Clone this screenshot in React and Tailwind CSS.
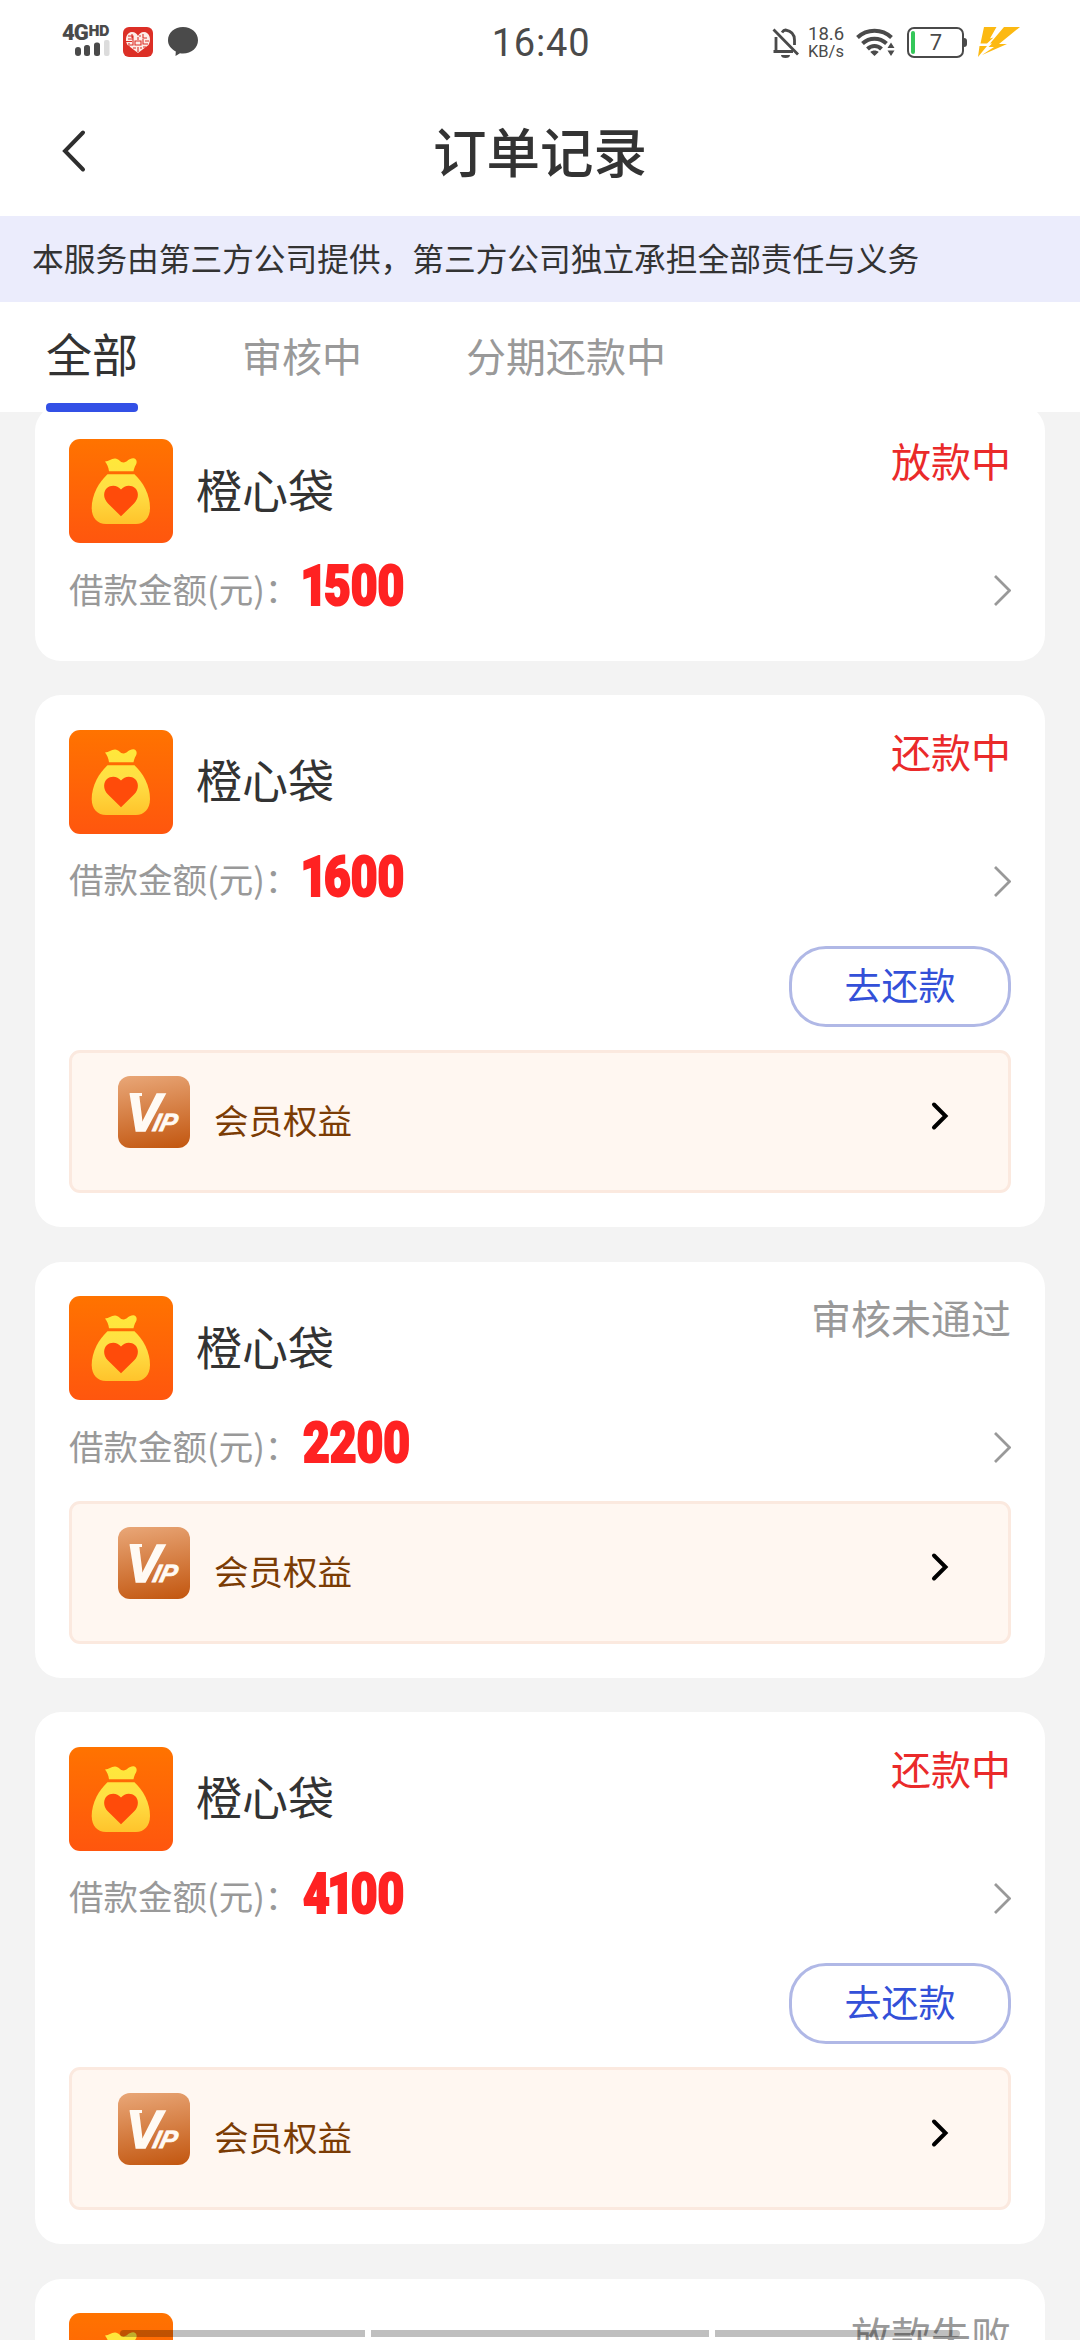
import React, { useState } from 'react';

const TABS = ['全部', '审核中', '分期还款中'];

const ORDERS = [
  { id: 1, amount: '1500', status: '放款中', active: true, canRepay: false, vip: false },
  { id: 2, amount: '1600', status: '还款中', active: true, canRepay: true, vip: true },
  { id: 3, amount: '2200', status: '审核未通过', active: false, canRepay: false, vip: true },
  { id: 4, amount: '4100', status: '还款中', active: true, canRepay: true, vip: true },
  { id: 5, amount: '3000', status: '放款失败', active: false, canRepay: false, vip: false },
];

function StatusBar() {
  return (
    <div className="h-[84px] shrink-0 flex items-start justify-between pl-[62px] pr-[60px] pt-6 text-[#4a4a4a] font-['Roboto',sans-serif]">
      {/* Signal + notifications */}
      <div className="w-[300px] flex items-start">
        <div className="w-[50px]">
          <div className="flex items-start leading-none font-black">
            <span className="text-[22px] leading-[18px] tracking-[-1px]">4G</span>
            <span className="ml-px text-[14px] leading-[13px] font-['Inter',sans-serif]">HD</span>
          </div>
          <svg className="ml-[12px] -mt-[2px] block" width="36" height="16" viewBox="0 0 36 16">
            <rect x="1" y="7" width="6" height="9" rx="3" fill="#4a4a4a" />
            <rect x="10" y="5" width="6" height="11" rx="2.5" fill="#4a4a4a" />
            <rect x="20" y="2.5" width="6" height="13.5" rx="2.5" fill="#4a4a4a" />
            <rect x="30" y="0" width="5.5" height="16" rx="2" fill="#dcdcdc" />
          </svg>
        </div>
        <svg className="ml-[11px] mt-[3px]" width="30" height="30" viewBox="0 0 30 30">
          <rect width="30" height="30" rx="6" fill="#dc2f26" />
          <path d="M15 26 4.500 18C1 12 4 5 9 5c3 0 5 2 6 4 1-2 3-4 6-4 5 0 8 7 4.500 13z" fill="#fdeee8" />
          <path d="M5 9h5v3H5m4-5v4m11-4v4h4m-6-2h-2M3 14.500h6M6 16v4m4-8v6H7M15 10v3m-3 1h6v4h-6zM15 20v5m5-13v5h5m-3-3h4m-6 6h3M10 21h3m4 0h2" stroke="#dc2f26" strokeWidth="1.100" fill="none" />
        </svg>
        <svg className="ml-[15px] mt-[3px]" width="30" height="29" viewBox="0 0 30 29">
          <path d="M15 0c8.500 0 15 5.800 15 13.300S23.500 26.500 15 26.500c-1 0-2 0-3-.2L7.500 29l.3-4.500C3 22 0 18 0 13.300 0 5.800 6.500 0 15 0z" fill="#4a4a4a" />
        </svg>
      </div>

      <div className="text-[38px] leading-[38px] tracking-[0.8px]">16:40</div>

      {/* Network + battery */}
      <div className="w-[300px] flex items-start justify-end">
        <svg className="mt-1" width="28" height="31" viewBox="0 0 28 31" fill="none" stroke="#4a4a4a" strokeWidth="2.8">
          <path d="M1.500 1.500 26 26.500M1.500 23.500H21M4 24V9M10 4.500C11 3 12 2 13.500 2c5.500 1 9 4 9 10v5" />
          <path d="M9 27h9a4.500 3 0 0 1-9 0z" fill="#4a4a4a" stroke="none" />
        </svg>
        <div className="ml-[8px] mt-[2px] w-[38px] text-[18.5px] leading-[17px]">
          <div>18.6</div>
          <div className="text-[16.5px]">KB/s</div>
        </div>
        <svg className="ml-[10px] mt-1" width="40" height="30" viewBox="0 0 40 30" fill="none" stroke="#4a4a4a" strokeWidth="4">
          <path d="M1.500 9.500C11 .500 26 .500 35.500 9.500M6.500 15.500c7-6.500 17-6.500 24 0M11.500 21c4-4 10-4 14 0" />
          <path d="M18.500 28l-4.200-4c2-2 6.400-2 8.400 0zM35 14.500l3.500 5.500h-7zM35 28l3.500-5.500h-7z" fill="#4a4a4a" stroke="none" />
        </svg>
        <div className="ml-[11px] mt-[3px] flex items-center">
          <div className="w-[57px] h-[31px] border-2 border-[#4a4a4a] rounded-[7px] flex items-center p-[2px]">
            <div className="w-[4px] h-[23px] rounded-[2px] bg-[#34c759]" />
            <div className="flex-1 text-center text-[22px] leading-none pr-[3px]">7</div>
          </div>
          <div className="w-[3px] h-[9px] bg-[#4a4a4a] rounded-r" />
        </div>
        <svg className="ml-[11px] mt-[3px]" width="42" height="30" viewBox="0 0 42 30">
          <path d="M6 0H18.500L12 11.500 15.500 10.500 9 16.500H2.500zM26 0H42L21 17H29L4 28 16 20H10.500L14 16.500H12zM1.500 19H9L0 30z" fill="#fcb912" />
        </svg>
      </div>
    </div>
  );
}

function AppIcon() {
  return (
    <svg className="shrink-0" width="104" height="104" viewBox="0 0 104 104">
      <defs>
        <linearGradient id="bagBg" x1="0" y1="0" x2="0" y2="1">
          <stop offset="0" stopColor="#ff7300" />
          <stop offset="1" stopColor="#ff560e" />
        </linearGradient>
        <linearGradient id="bagFill" x1="0" y1="19" x2="0" y2="85" gradientUnits="userSpaceOnUse">
          <stop offset="0" stopColor="#ffe83a" />
          <stop offset="0.5" stopColor="#ffdf45" />
          <stop offset="1" stopColor="#ffc32b" />
        </linearGradient>
      </defs>
      <rect width="104" height="104" rx="11" fill="url(#bagBg)" />
      <path d="M36 22.500C40 22.500 42 19.500 46 19.500c4 0 5 4 8.500 4S60 19 64.500 19.300c3 .5 4 3.500 2.500 6.200-1.500 2.500-2 4.500-2.500 6.800H40c-.5-4.500-2-7-4-9.800z" fill="url(#bagFill)" />
      <path d="M38.500 35.300H65.500C74 43 81 56 81 69c0 10-6 16-14 16H37c-8.500 0-14.300-6-14.300-16C22.700 56 30 43 38.500 35.300z" fill="url(#bagFill)" />
      <path d="M52 77.300 39 64.500C33.500 59 34.500 52 38 49c4-3.500 10.500-3 14 1.500C55.500 46 62 45.500 66 49c3.500 3 4.500 10-1 15.500z" fill="#ff4b0a" />
    </svg>
  );
}

function VipBadge() {
  return (
    <svg
      className="shrink-0 rounded-[12px] bg-linear-[170deg] from-[#e9a778] to-[#c2560f] font-['Liberation_Sans',sans-serif] font-bold italic"
      width="72"
      height="72"
      viewBox="0 0 72 72"
      fill="#fffaf4"
      stroke="#fffaf4"
    >
      <rect x="12" y="17" width="12" height="3" stroke="none" />
      <text x="8" y="54.5" fontSize="53" strokeWidth="1.5">V</text>
      <text transform="translate(33.5 54.5) skewX(-14)" fontSize="25" strokeWidth="0.8">IP</text>
    </svg>
  );
}

function VipBox() {
  return (
    <div className="h-[143px] border-[3px] border-[#fbe9df] rounded-[11px] bg-[#fff7f1] flex items-start pl-[46px] pr-[58px] pt-[23px]">
      <VipBadge />
      <div className="ml-6 mt-[17px] text-[34.5px] leading-[52px] text-[#7b3c05]">会员权益</div>
      <svg className="ml-auto mt-[25px]" width="20" height="30" viewBox="0 0 20 30" fill="none">
        <path d="M4 3.500 15.500 15 4 26.500" stroke="#000" strokeWidth="4" strokeLinecap="round" />
      </svg>
    </div>
  );
}

function Amount({ value }) {
  return (
    <div className="pt-[17px] flex text-[55px] leading-[52px] font-black text-[#ff2222] font-['Roboto',sans-serif] origin-left scale-x-[0.84] [-webkit-text-stroke:2px_#ff2222]">
      {/* the figure one is set tighter than the others */}
      {value.split('').map((digit, i) => (
        <span key={i} className={digit === '1' ? '-ml-[3px] -mr-[4px]' : ''}>{digit}</span>
      ))}
    </div>
  );
}

function OrderCard({ order }) {
  return (
    <div className="shrink-0 bg-white rounded-[26px] px-[34px] pt-[34.5px] pb-[34px]">
      <div className="flex items-start">
        <AppIcon />
        <div className="ml-[23px] h-[98px] flex items-center text-[46px] text-[#333]">橙心袋</div>
        <div className={`ml-auto text-[40px] leading-[43px] ${order.active ? 'text-[#ea2a2a]' : 'text-[#999]'}`}>
          {order.status}
        </div>
      </div>

      <div className="h-[83.5px] flex items-start">
        <div className="w-[234px] pt-[18.5px] text-[34.5px] leading-[52px] text-[#999] whitespace-nowrap">借款金额(元)：</div>
        <Amount value={order.amount} />
        <svg className="ml-auto mt-[31px]" width="20" height="32" viewBox="0 0 20 32" fill="none">
          <path d="M4 2 18.500 16.500 4 31" stroke="#999" strokeWidth="2.8" />
        </svg>
      </div>

      {order.canRepay && (
        <div className="pt-[29px] pb-[6px] flex justify-end">
          <button className="w-[222px] h-[81px] pb-[4px] border-[3px] border-[#b0b8e6] rounded-[37px] text-[37px] leading-none text-[#3350d8]">
            去还款
          </button>
        </div>
      )}

      {order.vip && (
        <div className="pt-[17px]">
          <VipBox />
        </div>
      )}
    </div>
  );
}

export default function App() {
  const [tab, setTab] = useState(0);

  return (
    <div className="relative w-[1080px] h-[2340px] overflow-hidden flex flex-col bg-[#f3f3f3] font-['Noto_Sans_CJK_SC',sans-serif]">
      <div className="bg-white shrink-0">
        <StatusBar />

        {/* Title bar */}
        <div className="h-[132px] grid grid-cols-3 items-center">
          <svg className="ml-[58px]" width="32" height="48" viewBox="0 0 32 48" fill="none">
            <path d="M25 6.500 7 25 25 43.500" stroke="#2e2e2e" strokeWidth="4" strokeLinecap="round" />
          </svg>
          <div className="text-center text-[53.5px] font-medium text-[#333]">订单记录</div>
        </div>

        <div className="h-[86px] pb-[2px] bg-[#ebecfc] px-8 flex items-center text-[31.7px] text-[#333] whitespace-nowrap">
          本服务由第三方公司提供，第三方公司独立承担全部责任与义务
        </div>

        {/* Tabs */}
        <div className="h-[110px] flex pl-[46px]">
          {TABS.map((label, i) => (
            <button
              key={label}
              onClick={() => setTab(i)}
              className={`h-[110px] mr-[104px] flex flex-col justify-between ${
                i === tab ? 'text-[46px] leading-[101px] text-[#333]' : 'text-[40px] leading-[106px] text-[#999]'
              }`}
            >
              <span className="h-[101px]">{label}</span>
              {i === tab && <span className="w-full h-[9px] rounded-[4px] bg-[#3350e6]" />}
            </button>
          ))}
        </div>
      </div>

      {/* Order list, scrolled slightly under the tabs */}
      <div className="flex-1 min-h-0 overflow-hidden px-[35px]">
        <div className="-mt-[7.5px] flex flex-col gap-[34.5px]">
          {ORDERS.map((order) => (
            <OrderCard key={order.id} order={order} />
          ))}
        </div>
      </div>

      {/* System gesture bar */}
      <div className="absolute left-[120px] bottom-[3px] w-[840px] h-[7px] flex gap-[6px]">
        <div className="w-[245px] rounded-l bg-black/25" />
        <div className="flex-1 bg-black/25" />
        <div className="w-[245px] rounded-r bg-black/25" />
      </div>
    </div>
  );
}
